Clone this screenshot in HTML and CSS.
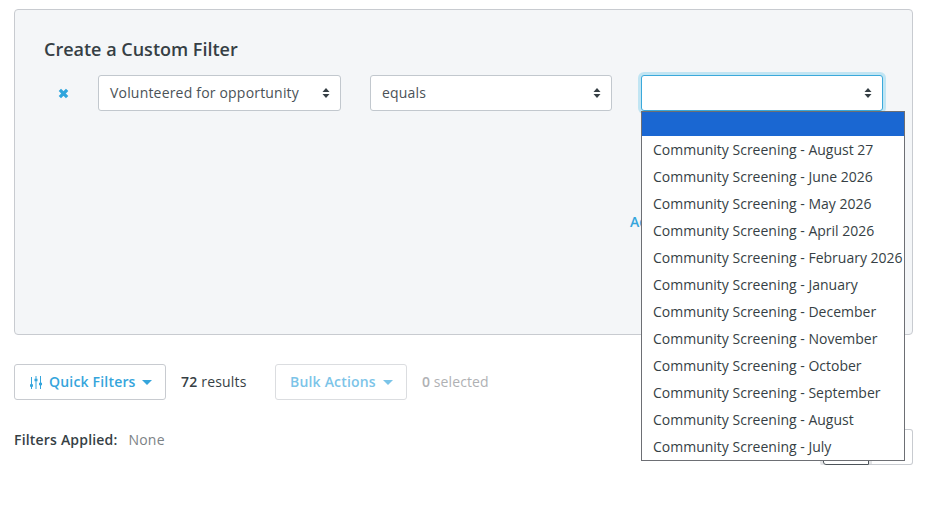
FILE: index.html
```html
<!DOCTYPE html>
<html lang="en">
<head>
<meta charset="utf-8">
<title>Custom Filter</title>
<link rel="stylesheet" href="styles.css">
</head>
<body>
<main class="page">
  <section class="panel">
    <h2 class="panel-title">Create a Custom Filter</h2>
    <div class="filter-row">
      <button class="remove" aria-label="Remove"><svg width="11" height="11" viewBox="0 0 10 10"><path d="M1.7 1.7 8.3 8.3M8.3 1.7 1.7 8.3"/></svg></button>
      <div class="select"><span class="value">Volunteered for opportunity</span><svg class="sort" width="8" height="10" viewBox="0 0 8 10"><path d="M4 0 7.5 4H.5zM4 10 .5 6h7z"/></svg></div>
      <div class="select"><span class="value">equals</span><svg class="sort" width="8" height="10" viewBox="0 0 8 10"><path d="M4 0 7.5 4H.5zM4 10 .5 6h7z"/></svg></div>
      <div class="select focused"><span class="value"></span><svg class="sort" width="8" height="10" viewBox="0 0 8 10"><path d="M4 0 7.5 4H.5zM4 10 .5 6h7z"/></svg>
        <ul class="menu">
          <li class="active"></li>
          <li><span>Community Screening - August 27</span></li>
          <li><span>Community Screening - June 2026</span></li>
          <li><span>Community Screening - May 2026</span></li>
          <li><span>Community Screening - April 2026</span></li>
          <li><span>Community Screening - February 2026</span></li>
          <li><span>Community Screening - January</span></li>
          <li><span>Community Screening - December</span></li>
          <li><span>Community Screening - November</span></li>
          <li><span>Community Screening - October</span></li>
          <li><span>Community Screening - September</span></li>
          <li><span>Community Screening - August</span></li>
          <li><span>Community Screening - July</span></li>
        </ul>
      </div>
    </div>
    <a class="add">Add</a>
  </section>
  <div class="toolbar">
    <button class="btn quick"><svg class="sliders" width="12" height="13" viewBox="0 0 12 13"><path class="rail" d="M1.5 1v12M6 0v13M10.5 0v13"/><path class="knob" d="M0 9.5h3M4.5 4h3M9 8h3"/></svg><span class="quick-label">Quick Filters</span><i class="caret"></i></button>
    <span class="results"><b>72</b> results</span>
    <button class="btn bulk"><span class="bulk-label">Bulk Actions</span><i class="caret"></i></button>
    <span class="selected"><b>0</b> selected</span>
  </div>
  <div class="footer">
    <div class="applied"><b>Filters Applied:</b><span>None</span></div>
    <div class="toggle"><span class="toggle-on"></span><span class="toggle-off"></span></div>
  </div>
</main>
</body>
</html>
```
FILE: styles.css
```css
* { box-sizing: border-box; }
body { margin: 0; background: #fff; color: #363f45; font: 14px/20px "Open Sans", sans-serif; }
button { font: inherit; margin: 0; padding: 0; background: none; border: 0; }
b { font-weight: 600; }
svg { display: block; flex: none; }
.page { padding: 9px 18px 0 14px; }
.panel { height: 326px; border: 1px solid #c8cbd0; border-radius: 4px; background: #f4f6f8; padding: 26px 29px 0; }
.panel-title { margin: 0; font-size: 18px; line-height: 26px; font-weight: 600; }
.filter-row { display: grid; grid-template-columns: 25px 243px 242px 242px; column-gap: 29px; margin-top: 13px; }
.remove { display: flex; align-items: center; justify-content: flex-start; padding: 1px 0 0 14px; }
.remove path { stroke: #2fa5dc; stroke-width: 3; fill: none; }
.select { position: relative; height: 36px; display: flex; align-items: center; justify-content: space-between; border: 1px solid #c2c8ce; border-radius: 3px; background: #fff; padding: 0 10px 0 11px; }
.value { letter-spacing: .19px; color: #4a5257; }
.sort { fill: #363f45; }
.focused { border-color: #3ba9db; box-shadow: 0 0 0 3px #c1e5f3; }
.menu { position: absolute; left: -1px; top: 35px; width: 264px; height: 350px; margin: 0; padding: 0; list-style: none; background: #fff; border: 1px solid #6d6f74; z-index: 5; }
.menu li { height: 27px; padding-left: 11px; line-height: 27px; white-space: nowrap; }
.menu .active { height: 24px; background: #1a67d2; }
.add { display: block; margin: 101px 0 0 586px; color: #35a5dc; font-weight: 600; }
.toolbar { display: flex; align-items: center; margin-top: 29px; height: 36px; letter-spacing: .19px; }
.btn { height: 36px; display: flex; align-items: center; border: 1px solid #c8cbd0; border-radius: 3px; color: #35a5dc; font-weight: 600; white-space: nowrap; letter-spacing: .19px; }
.quick { width: 152px; padding: 0 13px 0 14px; }
.sliders { margin: 1px 7px 0 1px; fill: none; stroke: #35a5dc; }
.rail { stroke-width: 1; }
.knob { stroke-width: 2.4; }
.caret { margin-left: auto; border: 5px solid transparent; border-top-color: currentColor; border-bottom: 0; }
.results { width: 94px; padding-left: 15px; margin-right: 15px; white-space: nowrap; }
.bulk { width: 132px; padding: 0 13px 0 14px; opacity: .65; }
.selected { margin-left: 15px; color: #afb1b4; letter-spacing: .1px; }
.footer { display: flex; justify-content: space-between; margin-top: 29px; height: 36px; }
.applied span { margin-left: 11px; color: #7c8286; }
.applied { line-height: 21px; letter-spacing: .19px; }
.toggle { display: flex; }
.toggle-on { width: 46px; border: 1px solid #4d545a; border-radius: 3px 0 0 3px; box-shadow: 0 0 0 3px #e3e4e6; }
.toggle-off { width: 44px; border: 1px solid #c8cbd0; border-left: 0; border-radius: 0 3px 3px 0; }
```
